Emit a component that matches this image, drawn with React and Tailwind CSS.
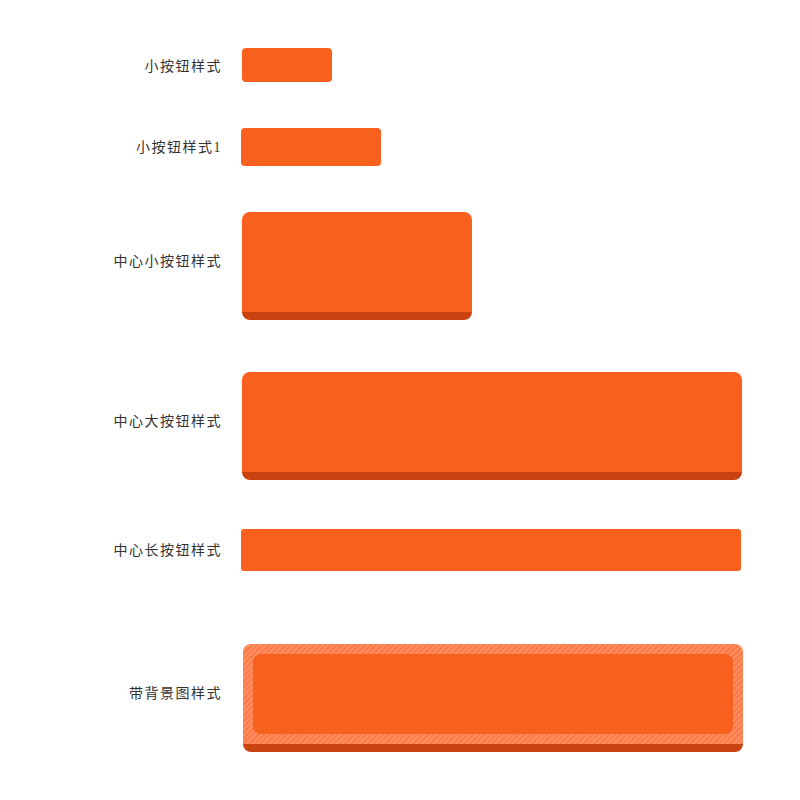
export default function App() {
  const label = "w-[222px] shrink-0 text-right text-[14px] tracking-[1.5px] text-[#333]";
  return (
    <div
      className="w-[800px] h-[800px] bg-white pt-[48px]"
      style={{ fontFamily: '"Liberation Serif", "Noto Sans CJK SC", serif' }}
    >
      {/* 小按钮 */}
      <div className="flex items-center">
        <div className={`${label} pt-[3px]`}>小按钮样式</div>
        <div className="ml-[20px] w-[90px] h-[34px] rounded-[4px] bg-[#f8601e]" />
      </div>

      <div className="flex items-center mt-[46px]">
        <div className={label}>小按钮样式1</div>
        <div className="ml-[19px] w-[140px] h-[38px] rounded-[4px] bg-[#f8601e]" />
      </div>

      {/* 中心小按钮 */}
      <div className="flex items-center mt-[46px]">
        <div className={`${label} pb-[10px]`}>中心小按钮样式</div>
        <div className="ml-[20px] w-[230px] h-[108px] rounded-[8px] bg-[#f8601e] border-b-8 border-[#c8430f]" />
      </div>

      {/* 中心大按钮 */}
      <div className="flex items-center mt-[52px]">
        <div className={`${label} pb-[10px]`}>中心大按钮样式</div>
        <div className="ml-[20px] w-[500px] h-[108px] rounded-[8px] bg-[#f8601e] border-b-8 border-[#c8430f]" />
      </div>

      {/* 中心长按钮 */}
      <div className="flex items-center mt-[49px]">
        <div className={label}>中心长按钮样式</div>
        <div className="ml-[19px] w-[500px] h-[42px] rounded-[3px] bg-[#f8601e]" />
      </div>

      {/* 带背景图 */}
      <div className="flex items-center mt-[73px]">
        <div className={`${label} pb-[10px]`}>带背景图样式</div>
        <div className="ml-[21px] w-[500px] h-[108px] rounded-[8px] border-b-8 border-[#c8430f] p-[10px] bg-[repeating-linear-gradient(135deg,#ff8d5e_0px,#ff8d5e_2px,#fb7c4a_2px,#fb7c4a_4px)]">
          <div className="w-full h-full rounded-[8px] bg-[#f8601e]" />
        </div>
      </div>
    </div>
  );
}
